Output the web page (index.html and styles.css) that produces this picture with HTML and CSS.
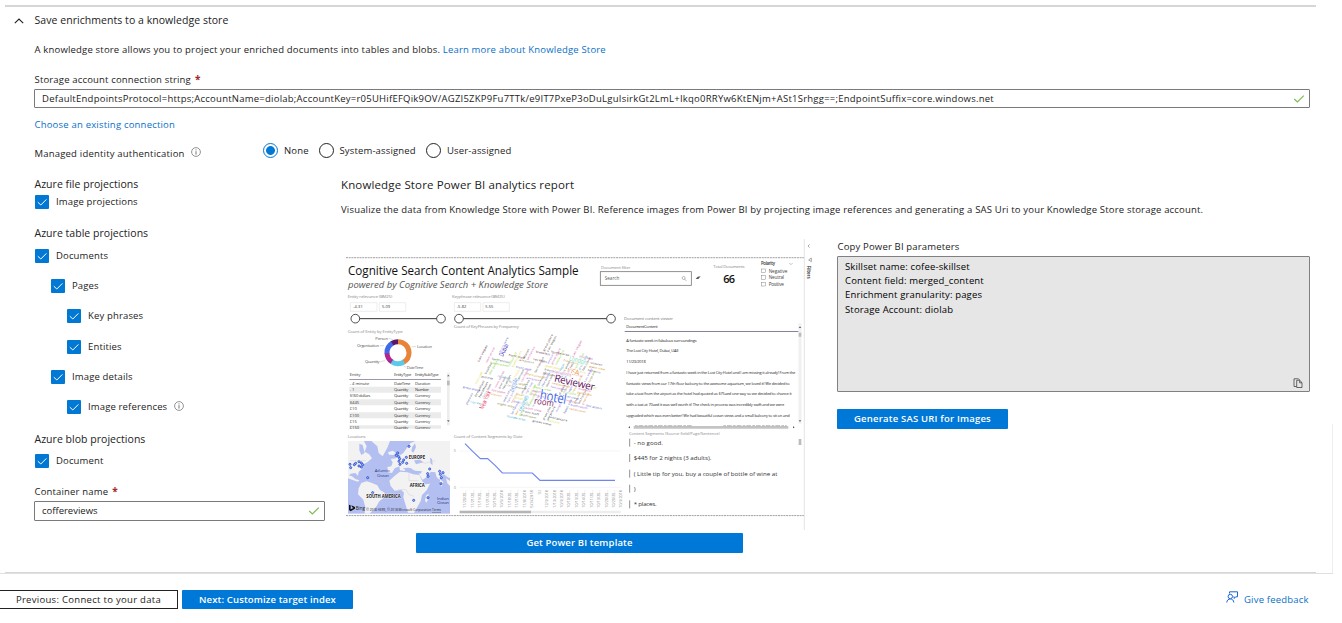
FILE: index.html
```html
<!DOCTYPE html>
<html lang="en">
<head>
<meta charset="utf-8">
<title>Save enrichments to a knowledge store</title>
<link rel="stylesheet" href="styles.css">
</head>
<body>
<svg class="defs" width="0" height="0" aria-hidden="true">
  <symbol id="tick" viewBox="0 0 14 14"><path d="M2.8 7.2 5.8 10 11.4 4.4" fill="none" stroke="#fff" stroke-width="1"/></symbol>
  <symbol id="ok" viewBox="0 0 12 10"><path d="M1.2 5 4.4 8 10.8 1.6" fill="none" stroke="#7fba52" stroke-width="1.2"/></symbol>
  <symbol id="info" viewBox="0 0 10 10"><circle cx="5" cy="5" r="4.4" fill="none" stroke="#777" stroke-width=".8"/><path d="M5 4.2V7.6M5 2.4v1" stroke="#666" stroke-width=".9"/></symbol>
</svg>
<div class="page">
  <main class="panel">
    <header class="head">
      <svg class="chevron" width="10" height="6" viewBox="0 0 10 6"><path d="M.8 5.2 5 1l4.2 4.2" fill="none" stroke="#222" stroke-width="1.1"/></svg>
      <h1 class="title"><span>Save enrichments to a knowledge store</span></h1>
    </header>
    <div class="content">
      <p class="desc"><span class="desc-text">A knowledge store allows you to project your enriched documents into tables and blobs.</span> <a class="link learn">Learn more about Knowledge Store</a></p>
      <div class="label conn-label"><span>Storage account connection string</span><b class="req">*</b></div>
      <div class="input conn"><span class="conn-text">DefaultEndpointsProtocol=https;AccountName=diolab;AccountKey=r05UHifEFQik9OV/AGZI5ZKP9Fu7TTk/e9IT7PxeP3oDuLguIsirkGt2LmL+Ikqo0RRYw6KtENjm+ASt1Srhgg==;EndpointSuffix=core.windows.net</span><svg width="12" height="10"><use href="#ok"/></svg></div>
      <div class="choose"><a class="link">Choose an existing connection</a></div>
      <div class="auth">
        <div class="auth-label"><span>Managed identity authentication</span><svg width="10" height="10"><use href="#info"/></svg></div>
        <div class="radios">
          <span class="radio on"></span><span class="rl none">None</span>
          <span class="radio"></span><span class="rl sys">System-assigned</span>
          <span class="radio"></span><span class="rl">User-assigned</span>
        </div>
      </div>
      <div class="cols">
        <section class="left">
          <h2 class="sub">Azure file projections</h2>
          <div class="check c1"><svg class="box"><use href="#tick"/></svg><span>Image projections</span></div>
          <h2 class="sub s2">Azure table projections</h2>
          <div class="check c2"><svg class="box"><use href="#tick"/></svg><span>Documents</span></div>
          <div class="check l1"><svg class="box"><use href="#tick"/></svg><span>Pages</span></div>
          <div class="check l2"><svg class="box"><use href="#tick"/></svg><span>Key phrases</span></div>
          <div class="check l2"><svg class="box"><use href="#tick"/></svg><span>Entities</span></div>
          <div class="check l1"><svg class="box"><use href="#tick"/></svg><span>Image details</span></div>
          <div class="check l2"><svg class="box"><use href="#tick"/></svg><span>Image references</span><svg class="inf" width="10" height="10"><use href="#info"/></svg></div>
          <h2 class="sub s3">Azure blob projections</h2>
          <div class="check c3"><svg class="box"><use href="#tick"/></svg><span>Document</span></div>
          <div class="label cont-label"><span>Container name</span><b class="req">*</b></div>
          <div class="input cont"><span>coffereviews</span><svg width="12" height="10"><use href="#ok"/></svg></div>
        </section>
        <section class="right">
          <h2 class="report">Knowledge Store Power BI analytics report</h2>
          <p class="visual"><span>Visualize the data from Knowledge Store with Power BI. Reference images from Power BI by projecting image references and generating a SAS Uri to your Knowledge Store storage account.</span></p>
          <div class="split">
            <div class="preview">
<svg class="dash" width="475" height="298" viewBox="340 235 475 298">
  <g stroke="#888" stroke-width=".8" stroke-dasharray="2 .7"><path d="M346 257.7H804M346 515.6H804"/></g>
  <path d="M804.3 239V530" stroke="#e4e4e4" stroke-width="1"/>
  <g transform="translate(340 235) scale(.33333)">
    <text x="24" y="119" font-size="36" fill="#111" textLength="692" lengthAdjust="spacingAndGlyphs">Cognitive Search Content Analytics Sample</text>
    <text x="24" y="160" font-size="28" font-style="italic" fill="#555" textLength="600" lengthAdjust="spacingAndGlyphs">powered by Cognitive Search + Knowledge Store</text>
    <g fill="#888" font-size="13">
      <text x="23" y="188" textLength="134">Entity relevance (BM25)</text>
      <text x="336" y="188" textLength="158">Keyphrase relevance (BM25)</text>
      <text x="341" y="278" textLength="196">Count of KeyPhrases by Frequency</text>
      <text x="23" y="294" textLength="165">Count of Entity by EntityType</text>
    </g>
    <g fill="none" stroke="#e6e6e6" stroke-width="2"><path d="M31 203h80v26H31zM118 203h79v26h-79zM343 203h79v26h-79zM429 203h79v26h-79z"/></g>
    <g fill="#333" font-size="12"><text x="39" y="220" textLength="29">-4.31</text><text x="126" y="220" textLength="24">5.09</text><text x="350" y="220" textLength="29">-5.82</text><text x="436" y="220" textLength="24">5.55</text></g>
    <path d="M46 251H303M357 251H812" stroke="#333" stroke-width="3"/>
    <g fill="#fff" stroke="#333" stroke-width="2.6"><circle cx="46" cy="251" r="13"/><circle cx="303" cy="251" r="13"/><circle cx="357" cy="251" r="13"/><circle cx="813" cy="251" r="13"/></g>
    <g fill="none" stroke-width="15">
      <circle cx="174" cy="353" r="33" stroke="#e8833a" stroke-dasharray="86 300" transform="rotate(-90 174 353)"/>
      <circle cx="174" cy="353" r="33" stroke="#5cc8ea" stroke-dasharray="40 300" transform="rotate(57 174 353)"/>
      <circle cx="174" cy="353" r="33" stroke="#b0278f" stroke-dasharray="31 300" transform="rotate(124 174 353)"/>
      <circle cx="174" cy="353" r="33" stroke="#3f68ea" stroke-dasharray="36 300" transform="rotate(176 174 353)"/>
      <circle cx="174" cy="353" r="33" stroke="#5a1768" stroke-dasharray="19 300" transform="rotate(237 174 353)"/>
    </g>
    <g fill="#555" font-size="12.5">
      <text x="106" y="314" textLength="38">Person</text><text x="51" y="336" textLength="66">Organisation</text><text x="75" y="383" textLength="44">Quantity</text><text x="231" y="339" textLength="45">Location</text><text x="200" y="402" textLength="50">DateTime</text>
    </g>
    <path d="M146 310l14 4M119 332h13M215 335h13M121 380l14-3M190 392l8 5" stroke="#bbb" stroke-width="1.5" fill="none"/>
  </g>
  <g transform="translate(570 235) scale(.33333)">
    <text x="93" y="101" font-size="12.5" fill="#888" textLength="88">Document filter</text>
    <rect x="91" y="110" width="273" height="41" fill="#fff" stroke="#777" stroke-width="2.4"/>
    <text x="104" y="135" font-size="13.5" fill="#555" textLength="44">Search</text>
    <circle cx="341" cy="129" r="4.5" fill="none" stroke="#777" stroke-width="1.5"/><path d="m344 132 5 6" stroke="#777" stroke-width="1.5"/>
    <path d="m377 132 6-7 9-1-7 8z" fill="#555"/>
    <text x="430" y="98" font-size="13" fill="#888" textLength="94">Total Documents</text>
    <text x="460" y="144" font-size="33" font-weight="600" fill="#111" textLength="35">66</text>
    <text x="573" y="91" font-size="13" font-weight="600" fill="#333" textLength="42">Polarity</text>
    <path d="m658 84 5 5 5-5" fill="none" stroke="#888" stroke-width="1.5"/>
    <g fill="none" stroke="#888" stroke-width="1.5"><rect x="574" y="102" width="12" height="11"/><rect x="574" y="122" width="12" height="11"/><rect x="574" y="142" width="12" height="11"/></g>
    <g font-size="14" fill="#444"><text x="596" y="113" textLength="56">Negative</text><text x="596" y="133" textLength="46">Neutral</text><text x="596" y="153" textLength="46">Positive</text></g>
    <path d="m719 28-5 5 5 5M724 69l-8 6 8 5z" fill="none" stroke="#666" stroke-width="1.7"/>
    <text transform="translate(712 92) rotate(90)" font-size="13.5" font-weight="600" fill="#222" textLength="39">Filters</text>
    <text x="162" y="256" font-size="13" fill="#777" textLength="147">Document content viewer</text>
    <g fill="#222" font-size="12"><text x="169" y="278" textLength="94">DocumentContent</text>
      <text x="169" y="320" textLength="211">A fantastic week in fabulous surroundings</text><text x="169" y="352" textLength="157">The Lost City Hotel, Dubai, UAE</text><text x="169" y="384" textLength="58">11/23/2018</text></g>
    <path d="M164 289.500H686" stroke="#446" stroke-width="2"/>
    <path d="M690 265V566" stroke="#f0f0f0" stroke-width="9"/><path d="M690 293v12M690 612v18" stroke="#bbb" stroke-width="8"/><path d="m686 279 4-5 4 5zM686 556l4 5 4-5z" fill="#666"/>
  </g>
  <g transform="translate(570 360) scale(.33333)">
    <g font-size="12" fill="#222">
      <text x="169" y="41" textLength="507">I have just returned from a fantastic week in the Lost City Hotel and I am missing it already! From the</text>
      <text x="169" y="74" textLength="490">fantastic views from our 17th floor balcony to the awesome aquarium, we loved it! We decided to</text>
      <text x="169" y="106" textLength="496">take a taxi from the airport as the hotel had quoted us $75aed one way so we decided to chance it</text>
      <text x="169" y="138" textLength="474">with a taxi at 70aed it was well worth it! The check in process was incredibly swift and we were</text>
      <text x="169" y="170" textLength="490">upgraded which was even better! We had beautiful ocean views and a small balcony to sit on and</text>
    </g>
    <path d="M191 202H655" stroke="#c4c4c4" stroke-width="8"/><path d="M195 197H365M460 197H650" stroke="#777" stroke-width="1.5" stroke-dasharray="8 3 14 4"/><path d="m180 199-5 3 5 3zM669 199l5 3-5 3z" fill="#444"/>
    <text x="177" y="225" font-size="12" fill="#888" textLength="272">Content Segments (Source field/Page/Sentence)</text>
    <path d="M179 236v24M179 282v24M179 329v24M179 374v24M179 421v24" stroke="#777" stroke-width="2.4"/>
    <g fill="#333" font-size="18.5"><text x="191" y="254" textLength="88">- no good.</text><text x="191" y="300" textLength="233">$445 for 2 nights (3 adults).</text><text x="191" y="347" textLength="431">( Little tip for you, buy a couple of bottle of wine at</text><text x="191" y="392">)</text><text x="191" y="439" textLength="69">* places.</text></g>
  </g>
  <g transform="translate(340 360) scale(.33333)">
    <path d="M28 80h275v18H28zM28 118h275v18H28zM28 157h275v18H28zM28 196h275v10H28z" fill="#ebebeb"/>
    <path d="M28 58.500H303" stroke="#777088" stroke-width="2.2"/>
    <path d="M325 38V196" stroke="#ededed" stroke-width="8"/><path d="M325 62v14" stroke="#bbb" stroke-width="8"/><path d="m321 49 4-5 4 5zM321 181l4 5 4-5z" fill="#666"/>
    <svg x="0" y="0" width="330" height="207" viewBox="0 0 330 207">
    <g font-size="12.5" fill="#333" id="table">
      <text x="29" y="48">Entity</text><text x="162" y="48" textLength="52">EntityType</text><text x="225" y="48" textLength="71">EntitySubType</text>
      <text x="29" y="74" textLength="58">- 4 minute</text><text x="162" y="74" textLength="49">DateTime</text><text x="225" y="74" textLength="46">Duration</text>
      <text x="29" y="93">- 1</text><text x="162" y="93" textLength="43">Quantity</text><text x="225" y="93" textLength="42">Number</text>
      <text x="29" y="112" textLength="62">$160 dollars</text><text x="162" y="112" textLength="43">Quantity</text><text x="225" y="112" textLength="46">Currency</text>
      <text x="29" y="131">$445</text><text x="162" y="131" textLength="43">Quantity</text><text x="225" y="131" textLength="46">Currency</text>
      <text x="29" y="151">£10</text><text x="162" y="151" textLength="43">Quantity</text><text x="225" y="151" textLength="46">Currency</text>
      <text x="29" y="170">£100</text><text x="162" y="170" textLength="43">Quantity</text><text x="225" y="170" textLength="46">Currency</text>
      <text x="29" y="189">£15</text><text x="162" y="189" textLength="43">Quantity</text><text x="225" y="189" textLength="46">Currency</text>
      <text x="29" y="208">£150</text><text x="162" y="208" textLength="43">Quantity</text><text x="225" y="208" textLength="46">Currency</text>
    </g></svg>
    <g fill="#888" font-size="13"><text x="23" y="234" textLength="54">Locations</text><text x="341" y="234" textLength="206">Count of Content Segments by Date</text></g>
    <rect x="24" y="243" width="306" height="218" fill="#b4bff1"/>
    <g fill="#f2f2f3">
      <path d="M24 243h48l8 16-6 16 14 8 8 12-14 12-12 6-4 14-10 8-2 12-8-8-14 2-8 8zM94 243h56l-8 20-14 26-12-10-4-20zM144 277l14-5 9 6-6 7-14-1z"/>
      <path d="m24 345 12 4 10 8 12 4-4 4-14-4-16-6zM64 369l16-5 14 4 18 8 8 14 14 8-4 16-12 10-8 14-10 12-12 11H74l2-20-6-22-16-16 2-18z"/>
      <path d="m190 279 10-14 12-16 14-6h104v112l-8-4-10-8-8 2-6 14-8-8-4-14-14-2-6 12-18 12-8-12-8-14-10 2-8-10-14-2-6 10-14-2-2-12-14 6-8 14-12-2-2-16 12-2 4-12-6-10 16-2z"/>
      <path d="m164 347 16-12 22 2 18 6 18 2 10 20 8 8 14-2-10 20-14 14-4 18-10 18-10 18-18-1-8-26-6-20 2-14-8-8-20 2-12-14-4-16zM258 407l7-6 1 15-7 12-4-6zM172 292l8-10 4 18-10 6z"/>
      <path d="m300 358 10 8-5 14-5-8zM318 355l12 8v15l-8-8z"/>
    </g>
    <g fill="#b4bff1"><path d="m58 251 10 4 6 24-10 6-6-14zM222 301l18-2 10 8-22 6zM270 293l6 4 2 18-6-4zM188 325l18-2 20 9 20 2-4 7-34-5zM217 260l8-10 3 12-8 16-6-5z"/></g>
    <g id="pins" fill="#a9b8ff" stroke="#1740c8" stroke-width="2.3"></g>
    <path d="M98 365h26l8 12M174 389h24l8 14 16 6M207 340v22h28M236 302l18 8 32-8M30 302h48" fill="none" stroke="#c9c9cf" stroke-width="1.2"/>
    <g font-size="13" font-weight="700" fill="#151515" stroke="#fff" stroke-width="1.5" paint-order="stroke"><text x="206" y="298" textLength="49" lengthAdjust="spacingAndGlyphs">EUROPE</text><text x="209" y="380" textLength="45" lengthAdjust="spacingAndGlyphs">AFRICA</text><text x="79" y="413" textLength="103" lengthAdjust="spacingAndGlyphs">SOUTH AMERICA</text></g>
    <g font-size="13" fill="#2b3a84"><text x="104" y="337" textLength="46">Atlantic</text><text x="111" y="350" textLength="36">Ocean</text><text x="291" y="419" textLength="36">Indian</text><text x="291" y="433" textLength="36">Ocean</text></g>
    <path d="m27 434 5 2v12l8-4-4-3-2-5 11 5v5l-13 8-5-4z" fill="#111"/>
    <text x="47" y="449" font-size="17" fill="#222" textLength="28" lengthAdjust="spacingAndGlyphs">Bing</text>
    <text x="79" y="454" font-size="9" fill="#111" textLength="194">© 2018 HERE, © 2018 Microsoft Corporation</text><text x="276" y="454" font-size="9" fill="#222" text-decoration="underline" textLength="27">Terms</text>
    <path d="M359 273H842M359 382H842" stroke="#e8e8e8" stroke-width="1.500"/>
    <g font-size="12" fill="#999"><text x="341" y="277">5</text><text x="341" y="386">0</text></g>
    <path d="m375 251 23 23 23 22h22l23 21 21 22h90l23 22h225" fill="none" stroke="#6f86f2" stroke-width="3.500"/>
    <g id="dates" font-size="12" fill="#888"></g>
    <path d="M359 456H842" stroke="#ededed" stroke-width="8"/><path d="M359 456H573" stroke="#b5b5b5" stroke-width="8"/>
  </g>
  <g transform="translate(440 330) scale(.33333)">
    <g id="cloud"></g>
    <g stroke="#fff" stroke-width="5" stroke-linejoin="round" paint-order="stroke">
      <text transform="translate(341 154) rotate(13)" font-size="31" fill="#5c0f61" textLength="124">Reviewer</text>
      <text transform="translate(298 208) rotate(10)" font-size="42" fill="#3d63e8" textLength="80" lengthAdjust="spacingAndGlyphs">hotel</text>
      <text transform="translate(281 221) rotate(8)" font-size="27" fill="#80205e" textLength="60" lengthAdjust="spacingAndGlyphs">room</text>
      <text transform="translate(380 130) rotate(10)" font-size="23" fill="#f0955a" textLength="38">USA</text>
      <text transform="translate(386 91) rotate(15)" font-size="22" fill="#7fe0bd" textLength="54" lengthAdjust="spacingAndGlyphs">London</text>
      <text transform="translate(189 81) rotate(-65)" font-size="20" fill="#4a2fc0" textLength="40" lengthAdjust="spacingAndGlyphs">Dubai</text>
      <text transform="translate(130 239) rotate(-66)" font-size="20" fill="#e8325c" textLength="58" lengthAdjust="spacingAndGlyphs">New York</text>
      <text transform="translate(246 246) rotate(-67)" font-size="20" fill="#49b8dd" textLength="50" lengthAdjust="spacingAndGlyphs">reviews</text>
      <text transform="translate(218 186) rotate(-67)" font-size="18" fill="#6d9be8" textLength="42" lengthAdjust="spacingAndGlyphs">people</text>
      <text transform="translate(332 127) rotate(12)" font-size="14" fill="#c77bcb" textLength="62" lengthAdjust="spacingAndGlyphs">reservations</text>
    </g>
  </g>
</svg>
              <button class="btn template"><span>Get Power BI template</span></button>
            </div>
            <div class="params">
              <div class="label"><span>Copy Power BI parameters</span></div>
              <div class="area">
                <div>Skillset name: cofee-skillset</div><div>Content field: merged_content</div><div>Enrichment granularity: pages</div><div>Storage Account: diolab</div>
                <svg class="copy" width="10" height="10" viewBox="0 0 10 10"><path d="M3.500 8.500H1V.8h4.500l1 1M3.700 2.300h3L9 4.600v4.900H3.700zM6.600 2.400v2.400H9" fill="none" stroke="#444" stroke-width=".8"/></svg>
              </div>
              <button class="btn sas"><span>Generate SAS URI for Images</span></button>
            </div>
          </div>
        </section>
      </div>
    </div>
    <div class="rule"></div>
  </main>
  <footer class="foot">
    <button class="prev"><span>Previous: Connect to your data</span></button>
    <button class="btn next"><span>Next: Customize target index</span></button>
    <a class="link feedback"><svg width="12" height="12" viewBox="0 0 12 12"><path d="M3.500 2.500V.8h8v5H9.700L8.200 7.500V5.800H7.500M.8 11.500C.8 6.800 7.800 6.800 7.800 11.500" fill="none" stroke="#1a67d2" stroke-width="1"/><circle cx="4.300" cy="5.500" r="2.200" fill="#fff" stroke="#1a67d2"/></svg><span>Give feedback</span></a>
  </footer>
</div>
<script src="dashboard.js"></script>
</body>
</html>
```

FILE: styles.css
```css
* { box-sizing: border-box; }
body { margin: 0; background: #fff; color: #222; font-family: "Open Sans", "Noto Sans", sans-serif; font-size: 9.5px; line-height: 14px; }
h1, h2, p { margin: 0; font-weight: 400; }
.defs { position: absolute; }
.page { width: 1342px; height: 623px; overflow: hidden; display: flex; flex-direction: column; }
.panel { width: 1333px; height: 574px; padding-top: 5px; border-bottom: 1px solid #e0e0e0; background: linear-gradient(#eee, #eee) right 0 bottom 0 / 1px 149px no-repeat; display: flex; flex-direction: column; }
.rule { margin: auto 0 0 5px; width: 1311px; height: 1px; background: #d6d6d6; }
.head { margin-left: 5px; width: 1311px; height: 34px; border-top: 2px solid #d6d6d6; display: flex; padding: 6px 0 0 9px; }
.chevron { margin-top: 5px; }
.title { font-size: 10.5px; margin-left: 10.5px; letter-spacing: .05px; }
.content { margin-left: 34px; width: 1276px; }
.desc { height: 20px; padding: 4px 0 0 .5px; white-space: nowrap; letter-spacing: .185px; }
.link { color: #0a70c8; }
.label { height: 14px; white-space: nowrap; letter-spacing: .17px; padding-left: .5px; }
.req { color: #a4262c; margin-left: 4px; font-size: 10px; }
.conn-label { margin-top: 13px; }
.input { height: 19px; border: 1px solid #7a7a7a; border-radius: 1px; display: flex; align-items: center; justify-content: space-between; padding: 0 4px 0 7px; white-space: nowrap; }
.conn { margin-top: 3px; }
.conn-text { letter-spacing: .24px; }
.choose { margin-top: 10px; height: 14px; letter-spacing: .2px; padding-left: .5px; }
.auth { height: 26px; margin-top: 7px; display: flex; }
.auth-label { width: 229px; padding: 8px 0 0 .5px; display: flex; gap: 6px; letter-spacing: .2px; }
.radios { display: flex; align-items: center; height: 23px; }
.radio { width: 15px; height: 15px; border: 1px solid #222; border-radius: 50%; margin-right: 6px; }
.radio.on { border-color: #0078d4; background: radial-gradient(circle, #0078d4 0 4px, transparent 4.800px); }
.rl { letter-spacing: .15px; }
.rl.none { width: 34.5px; }
.rl.sys { width: 86.5px; }
.cols { display: flex; height: 384px; padding-top: 12px; }
.left { flex: none; width: 307px; padding-left: 1px; }
.sub { font-size: 10.5px; height: 14px; letter-spacing: .03px; margin-left: -.5px; }
.s2 { margin-top: 16px; }
.s3 { margin-top: 16.5px; }
.check { display: flex; align-items: center; height: 16px; margin-top: 14.4px; letter-spacing: .15px; gap: 7px; }
.box { width: 14px; height: 14px; background: #0078d4; border-radius: 1px; }
.check.c1 { margin-top: 3px; }
.check.c2 { margin-top: 7.5px; }
.check.c3 { margin-top: 7px; }
.l1 { padding-left: 16px; }
.l2 { padding-left: 32px; }
.inf { margin-top: -2px; }
.cont-label { margin: 15px 0 0 -1px; }
.cont { margin: 3px 0 0 -1px; width: 291px; height: 20px; }
.right { flex: none; width: 969px; }
.report { font-size: 11.5px; height: 16px; line-height: 16px; letter-spacing: .14px; }
.visual { height: 14px; margin-top: 10px; white-space: nowrap; letter-spacing: .18px; }
.split { display: flex; margin-top: 18px; }
.preview { flex: none; width: 497px; margin-left: -1px; }
.dash { display: block; font-family: "Open Sans", "Noto Sans", sans-serif; }
.btn { display: block; height: 20px; border: 0; border-radius: 1px; background: #0078d7; color: #fff; font: 600 9.5px/18px "Open Sans", "Noto Sans", sans-serif; padding: 0; text-align: center; white-space: nowrap; letter-spacing: .14px; }
.template { width: 327px; margin-left: 76px; }
.params { flex: none; width: 473px; padding-top: 5px; }
.area { position: relative; margin-top: 2px; width: 473px; height: 136px; background: #e6e6e6; border: 1px solid #808080; border-radius: 1px; padding: 3px 7px; letter-spacing: .15px; line-height: 14.2px; color: #000; }
.copy { position: absolute; right: 6px; bottom: 3px; }
.sas { width: 171px; margin-top: 17px; letter-spacing: .2px; }
.foot { height: 49px; display: flex; padding-top: 16px; }
.prev { width: 178px; height: 19px; border: 1px solid #222; border-left: 0; background: #fff; color: #222; padding: 0; font: 9.5px/17px "Open Sans", "Noto Sans", sans-serif; letter-spacing: .3px; }
.next { width: 171px; height: 19px; margin-left: 4px; }
.feedback { margin-left: 872.5px; display: flex; gap: 6.5px; padding-top: 3px; letter-spacing: .2px; }
.feedback svg { margin-top: -2px; }
```

FILE: dashboard.js
```js
const NS = 'http://www.w3.org/2000/svg';
function add(parent, name, attrs, text) {
  const el = document.createElementNS(NS, name);
  for (const k in attrs) el.setAttribute(k, attrs[k]);
  if (text) el.textContent = text;
  parent.appendChild(el);
}

// Map pins
const pins = document.getElementById('pins');
[[30,313],[32,323],[43,314],[47,310],[57,305],[64,309],[68,314],[64,321],[57,318],[83,353],[98,398],[173,279],[169,286],[176,290],[179,296],[177,304],[180,313],[188,307],[191,300],[199,292],[200,310],[207,259],[221,421],[264,413],[264,349],[263,341],[269,327],[299,334],[301,343],[309,338],[304,353],[303,371]]
  .forEach(([cx, cy]) => add(pins, 'circle', { cx, cy, r: 3.2 }));

// Date axis labels
const dates = document.getElementById('dates');
['11/20/20…','11/21/20…','11/19/20…','11/21/20…','10/19/20…','10/5/2018','11/18/20…','11/21/20…','11/8/2018','5/3/2018','1/2','12/3/2018','1/13/2018','10/3/2018','10/10/20…','10/13/20…','10/14/20…','10/11/20…','10/13/20…','10/20/20…','10/20/20…','10/3/2018']
  .forEach((t, i) => add(dates, 'text', { transform: `translate(${379 + i * 22.3} ${t.length < 4 ? 404 : 443}) rotate(-90)`, textLength: t.length < 4 ? 14 : 53, lengthAdjust: 'spacingAndGlyphs' }, t));

// Word cloud filler terms woven along two tilted directions
const cloud = document.getElementById('cloud');
const outline = [[105,40],[150,62],[195,36],[205,70],[240,74],[262,44],[310,66],[315,44],[362,44],[380,0],[394,44],[440,56],[445,94],[484,92],[462,185],[464,235],[405,250],[335,288],[205,284],[190,232],[150,228],[122,238],[44,208],[62,148],[108,144]];
const inside = (x, y) => {
  let hit = false;
  for (let i = 0, j = outline.length - 1; i < outline.length; j = i++) {
    const [a, b] = outline[i], [c, d] = outline[j];
    if ((b > y) !== (d > y) && x < (c - a) * (y - b) / (d - b) + a) hit = !hit;
  }
  return hit;
};
const colors = ['#50555c','#3d4351','#dede20','#7ed42c','#8f6be0','#5a2a46','#e08a3a','#4d56c9','#7d7d30','#d750a8','#3b4fa8','#54412f','#d99a12','#2ca8d0'];
const terms = ['breakfast','location','San Francisco','night stay','front staff','Las Vegas','lounge area','pool area','room service','bathroom','restaurant','beach view','great view','great place','airport','Palm Jumeirah'];
let seed = 11;
const rnd = () => (seed = (seed * 16807) % 2147483647) / 2147483647;
for (let r = -7; r < 13; r++) {
  for (let c = -4; c < 18; c++) {
    const x = 30 + c * 40 - r * 15 + rnd() * 10, y = 50 + r * 32 + c * 8 + rnd() * 5;
    const steep = (r + c) % 2 === 0;
    for (let k = 0; k < 3; k++) {
      const px = steep ? x + k * 12 : x - k * 4, py = steep ? y + 26 + k * 2 : y + k * 11;
      const len = 34 + rnd() * 24, color = colors[Math.floor(rnd() * colors.length)], term = terms[Math.floor(rnd() * terms.length)];
      if (rnd() > .18 && inside(px + 1, py - 2) && inside(px + (steep ? 10 : 22), py + (steep ? -20 : 2)))
        add(cloud, 'text', { transform: `translate(${px} ${py}) rotate(${steep ? -62 : 12})`, 'font-size': 8, fill: color, textLength: len, lengthAdjust: 'spacingAndGlyphs' }, term);
    }
  }
}
```
